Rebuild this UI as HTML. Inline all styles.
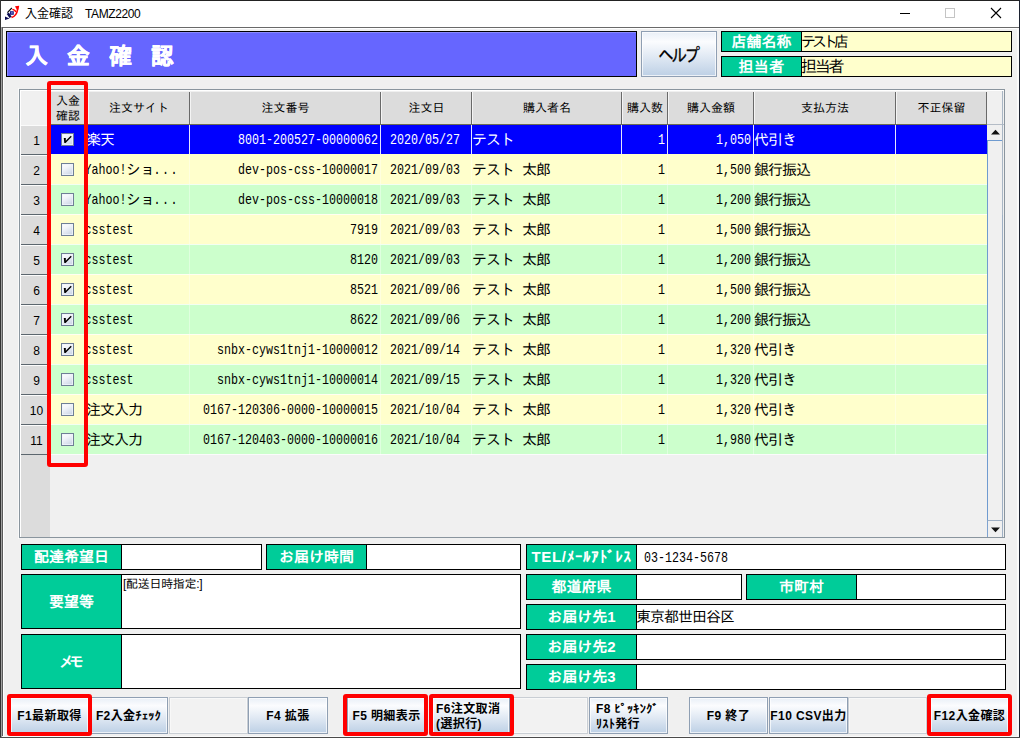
<!DOCTYPE html>
<html lang="ja"><head><meta charset="utf-8"><title>入金確認 TAMZ2200</title>
<style>
html,body{margin:0;padding:0}
body{width:1020px;height:738px;overflow:hidden;position:relative;background:#f0f0f0;font-family:"Liberation Sans","IPAGothic",sans-serif;color:#000}
div,span{box-sizing:border-box}
.a{position:absolute}
#win{left:0;top:0;width:1020px;height:738px;background:#f0f0f0;overflow:hidden}
#tbar{left:1px;top:1px;width:1018px;height:26px;background:#fff}
#ttl{left:25px;top:6px;font:12px/16px "Liberation Sans","Noto Sans CJK JP",sans-serif;white-space:pre}
#hdr{left:6px;top:31px;width:631px;height:46px;background:#6666ff;border:1px solid #000}
#hdr i{left:0;top:0;right:0;bottom:0;border-top:1px solid #8a8aff;border-left:1px solid #8a8aff}
#hdr b{left:18px;top:12px;font:bold 23px/24px "Liberation Sans","IPAGothic",sans-serif;letter-spacing:-2px;-webkit-text-stroke:.4px #fff;color:#fff;white-space:pre}
.btn{background:linear-gradient(#e9eff7 0%,#fbfcfe 22%,#dfe8f3 58%,#bdd0e5 100%);border:1px solid #8f9fb3;box-shadow:inset 0 0 0 1px rgba(255,255,255,.7);text-align:center}
#help{left:641px;top:31px;width:76px;height:46px;font:19px/47px "Liberation Sans","IPAGothic",sans-serif}
#help span{display:inline-block;transform:scaleX(.82);letter-spacing:-3px;margin-left:-3px;-webkit-text-stroke:.3px #000}
.lbl{background:#00cc99;border:1px solid #000;color:#fff;font:bold 15px/19px "Liberation Sans","IPAGothic",sans-serif;text-align:center;white-space:nowrap;overflow:hidden}
.fld{background:#fff;border:1px solid #000;white-space:nowrap;overflow:hidden}
.y{background:#ffffcc}
.m{font:15px/28px "Liberation Mono","IPAGothic",monospace;letter-spacing:-1px}
.t14{font-size:14px}
#grid{left:19px;top:89px;width:986px;height:449px;border:1px solid #8a959e;background:#f0f0f0;overflow:hidden}
.ch{top:2px;height:33px;background:#dcdcdc;font:12px/33px "Liberation Sans","IPAGothic",sans-serif;text-align:center;padding-left:1px;border-right:1px solid #696969;white-space:nowrap}
.rh{left:1px;width:29px;height:30px;background:#dcdcdc;border-bottom:1px solid #5c666e;border-top:1px solid #fbfbfb;font:12px/31px "Liberation Sans","Noto Sans CJK JP",sans-serif;text-align:center;padding-left:2px}
.row{left:28px;width:939px;height:30px}
.c{top:0;height:30px;font:15px/33px "Liberation Mono","IPAGothic",monospace;letter-spacing:-1px;white-space:nowrap;overflow:hidden;border-right:1px solid rgba(255,255,255,.38)}
.sel .c{border-right-color:rgba(255,255,255,.9)}
.c u{display:inline-block;width:8px;text-decoration:none}
.r{text-align:right;padding-right:2px}
.l{text-align:left}
.n{display:inline-block;position:relative;top:-1px;font-size:15px;letter-spacing:0;transform:scaleX(.7778)}
.n.d{letter-spacing:2px;margin-left:1px}
.r .n{transform-origin:100% 50%}
.l .n{transform-origin:0 50%}
.cb{left:13px;top:8px;width:13px;height:13px;border:1px solid #6f7f96;background:linear-gradient(150deg,#ffffff 0%,#f2f5fa 35%,#c6d1e3 100%);box-shadow:inset 0 0 0 1px rgba(240,244,250,.8)}
.cb svg{position:absolute;left:0;top:0}
.red{border:4px solid #ff0000;border-radius:3px}
.fb{top:697px;height:37px;font:bold 12px/15px "Liberation Sans","Noto Sans CJK JP",sans-serif;letter-spacing:.4px;white-space:nowrap}
.fb span{position:absolute;left:0;right:0;top:11px}
.fb i{font-style:normal;font-family:"Liberation Sans","IPAGothic",sans-serif}
.fb.two span{top:4px;text-align:left;left:3px}
.eb{top:697px;height:37px;border:1px solid #c9ced4;background:#f2f2f2;box-shadow:inset 0 0 0 1px #f8f8f8}
</style></head>
<body>
<div id="win" class="a">
<div id="tbar" class="a"></div>
<svg class="a" style="left:0;top:0" width="24" height="24" viewBox="0 0 24 24"><path d="M11.5 17.6C15 16.5 17 13.5 17.6 9.5" stroke="#f00" stroke-width="1.6" fill="none"/><path d="M15 6.2L19.2 5.8L18.6 9.6L17.2 10.6Z" fill="#f00"/><path d="M12.3 9.3C14 9.4 15.3 10.3 15.8 12" stroke="#f00" stroke-width="1.3" fill="none"/><path d="M11.8 8L7.4 12.6" stroke="#000" stroke-width="1.1"/><path d="M7.8 13.2L10.6 17.4" stroke="#0a0a50" stroke-width="2.6"/><path d="M5 16.4L5 19.9L9.6 18.4Z" fill="#0a0a50"/><rect x="10" y="11.2" width="3.8" height="3.6" fill="#1c1c8c"/><rect x="11.2" y="12.2" width="1.4" height="1.4" fill="#8c9cd8"/></svg>
<div id="ttl" class="a">入金確認　<span style="letter-spacing:-.4px">TAMZ2200</span></div>
<svg class="a" style="left:890px;top:1px" width="128" height="26" viewBox="0 0 128 26"><path d="M10 12.5H20" stroke="#000" stroke-width="1"/><rect x="55.5" y="7.5" width="9" height="9" fill="none" stroke="#c4c4c4" stroke-width="1"/><path d="M101 7L111 17M111 7L101 17" stroke="#000" stroke-width="1.1"/></svg>
<div class="a" style="left:0;top:0;width:1020px;height:1px;background:#222"></div>
<div class="a" style="left:0;top:0;width:1px;height:738px;background:#333"></div>
<div class="a" style="left:1019px;top:0;width:1px;height:738px;background:#1c2230"></div>
<div class="a" style="left:0;top:737px;width:1020px;height:1px;background:#4a4a4a"></div>
<div class="a" style="left:1px;top:27px;width:1018px;height:1px;background:#696969"></div>
<div class="a" style="left:1px;top:27px;width:1px;height:710px;background:#a0a0a0"></div>
<div class="a" style="left:2px;top:27px;width:1px;height:709px;background:#5a5a5a"></div>
<div class="a" style="left:3px;top:28px;width:1px;height:709px;background:#fff"></div>
<div class="a" style="left:3px;top:28px;width:1014px;height:1px;background:#fff"></div>
<div class="a" style="left:18px;top:88px;width:1px;height:451px;background:#fafafa"></div>
<div class="a" style="left:1017px;top:28px;width:2px;height:709px;background:#fafafa"></div>
<div class="a" style="left:3px;top:736px;width:1016px;height:1px;background:#fafafa"></div>
<div id="hdr" class="a"><i class="a"></i><b class="a">入　金　確　認</b></div>
<div id="help" class="a btn"><span>ヘルプ</span></div>
<div class="a lbl" style="left:721px;top:31px;width:81px;height:21px">店舗名称</div>
<div class="a fld y" style="left:801px;top:31px;width:211px;height:21px;font-size:15px;line-height:20px;letter-spacing:-4px;text-indent:-1px">テスト店</div>
<div class="a lbl" style="left:721px;top:56px;width:81px;height:21px;letter-spacing:.3px">担当者</div>
<div class="a fld y" style="left:801px;top:56px;width:211px;height:21px;font-size:16px;line-height:20px;letter-spacing:-2.2px;text-indent:-1px">担当者</div>
<div id="grid" class="a">
<div class="a" style="left:0;top:0;width:984px;height:1px;background:#fff"></div><div class="a" style="left:0;top:0;width:1px;height:447px;background:#fff"></div>
<div class="a" style="left:1px;top:1px;width:27px;height:34px;background:#f0f0f0"></div>
<div class="a ch" style="left:28px;width:40px;line-height:15px;padding:2px 0 0 1px">入金<br>確認</div>
<div class="a ch" style="left:68px;width:102px">注文サイト</div>
<div class="a ch" style="left:170px;width:191px">注文番号</div>
<div class="a ch" style="left:361px;width:91px">注文日</div>
<div class="a ch" style="left:452px;width:150px">購入者名</div>
<div class="a ch" style="left:602px;width:46px">購入数</div>
<div class="a ch" style="left:648px;width:86px">購入金額</div>
<div class="a ch" style="left:734px;width:142px">支払方法</div>
<div class="a ch" style="left:876px;width:91px">不正保留</div>
<div class="a" style="left:68px;top:2px;width:1px;height:33px;background:#f4f4f4"></div>
<div class="a" style="left:170px;top:2px;width:1px;height:33px;background:#f4f4f4"></div>
<div class="a" style="left:361px;top:2px;width:1px;height:33px;background:#f4f4f4"></div>
<div class="a" style="left:452px;top:2px;width:1px;height:33px;background:#f4f4f4"></div>
<div class="a" style="left:602px;top:2px;width:1px;height:33px;background:#f4f4f4"></div>
<div class="a" style="left:648px;top:2px;width:1px;height:33px;background:#f4f4f4"></div>
<div class="a" style="left:734px;top:2px;width:1px;height:33px;background:#f4f4f4"></div>
<div class="a" style="left:876px;top:2px;width:1px;height:33px;background:#f4f4f4"></div>
<div class="a" style="left:28px;top:34px;width:939px;height:1px;background:#6b6b55"></div>
<div class="a rh" style="top:35px">1</div>
<div class="a row sel" style="top:35px;height:29px;background:#0000ff;color:#fff">
<div class="a c" style="left:0;width:40px;top:0px"><div class="a cb"><svg width="11" height="11" viewBox="0 0 11 11"><path d="M1.8 4L3.8 4L3.8 6.8L8.8 1.8L9.7 2.7L3.6 8.9L2.3 8.9Z" fill="#000"/></svg></div></div>
<div class="a c l" style="left:40px;width:102px;top:0px;padding-left:0;text-indent:-2px">楽天</div>
<div class="a c r" style="left:142px;width:191px;top:0px"><span class="n" style="margin-left:-40.0px">8001-200527-00000062</span></div>
<div class="a c l" style="left:333px;width:91px;top:0px;padding-left:9px"><span class="n" style="margin-right:-20.0px">2020/05/27</span></div>
<div class="a c l" style="left:424px;width:150px;top:0px">テスト</div>
<div class="a c r" style="left:574px;width:46px;top:0px"><span class="n" style="margin-left:-2.0px">1</span></div>
<div class="a c r" style="left:620px;width:86px;top:0px"><span class="n" style="margin-left:-10.0px">1,050</span></div>
<div class="a c l" style="left:706px;width:142px;top:0px">代引き</div>
<div class="a c" style="left:848px;width:90px;top:0px;border-right:0"></div>
</div>
<div class="a rh" style="top:65px">2</div>
<div class="a row" style="top:64px;height:30px;background:#ffffcc;color:#000">
<div class="a c" style="left:0;width:40px;top:1px"><div class="a cb"></div></div>
<div class="a c l" style="left:40px;width:102px;top:1px;padding-left:0;text-indent:-2px"><span class="n" style="margin-right:-12.0px">Yahoo!</span>ショ<span class="n d">...</span></div>
<div class="a c r" style="left:142px;width:191px;top:1px"><span class="n" style="margin-left:-40.0px">dev-pos-css-10000017</span></div>
<div class="a c l" style="left:333px;width:91px;top:1px;padding-left:9px"><span class="n" style="margin-right:-20.0px">2021/09/03</span></div>
<div class="a c l" style="left:424px;width:150px;top:1px">テスト<u> </u>太郎</div>
<div class="a c r" style="left:574px;width:46px;top:1px"><span class="n" style="margin-left:-2.0px">1</span></div>
<div class="a c r" style="left:620px;width:86px;top:1px"><span class="n" style="margin-left:-10.0px">1,500</span></div>
<div class="a c l" style="left:706px;width:142px;top:1px">銀行振込</div>
<div class="a c" style="left:848px;width:90px;top:1px;border-right:0"></div>
</div>
<div class="a rh" style="top:95px">3</div>
<div class="a row" style="top:94px;height:30px;background:#ccffcc;color:#000">
<div class="a c" style="left:0;width:40px;top:1px"><div class="a cb"></div></div>
<div class="a c l" style="left:40px;width:102px;top:1px;padding-left:0;text-indent:-2px"><span class="n" style="margin-right:-12.0px">Yahoo!</span>ショ<span class="n d">...</span></div>
<div class="a c r" style="left:142px;width:191px;top:1px"><span class="n" style="margin-left:-40.0px">dev-pos-css-10000018</span></div>
<div class="a c l" style="left:333px;width:91px;top:1px;padding-left:9px"><span class="n" style="margin-right:-20.0px">2021/09/03</span></div>
<div class="a c l" style="left:424px;width:150px;top:1px">テスト<u> </u>太郎</div>
<div class="a c r" style="left:574px;width:46px;top:1px"><span class="n" style="margin-left:-2.0px">1</span></div>
<div class="a c r" style="left:620px;width:86px;top:1px"><span class="n" style="margin-left:-10.0px">1,200</span></div>
<div class="a c l" style="left:706px;width:142px;top:1px">銀行振込</div>
<div class="a c" style="left:848px;width:90px;top:1px;border-right:0"></div>
</div>
<div class="a rh" style="top:125px">4</div>
<div class="a row" style="top:124px;height:30px;background:#ffffcc;color:#000">
<div class="a c" style="left:0;width:40px;top:1px"><div class="a cb"></div></div>
<div class="a c l" style="left:40px;width:102px;top:1px;padding-left:0;text-indent:-2px"><span class="n" style="margin-right:-14.0px">csstest</span></div>
<div class="a c r" style="left:142px;width:191px;top:1px"><span class="n" style="margin-left:-8.0px">7919</span></div>
<div class="a c l" style="left:333px;width:91px;top:1px;padding-left:9px"><span class="n" style="margin-right:-20.0px">2021/09/03</span></div>
<div class="a c l" style="left:424px;width:150px;top:1px">テスト<u> </u>太郎</div>
<div class="a c r" style="left:574px;width:46px;top:1px"><span class="n" style="margin-left:-2.0px">1</span></div>
<div class="a c r" style="left:620px;width:86px;top:1px"><span class="n" style="margin-left:-10.0px">1,500</span></div>
<div class="a c l" style="left:706px;width:142px;top:1px">銀行振込</div>
<div class="a c" style="left:848px;width:90px;top:1px;border-right:0"></div>
</div>
<div class="a rh" style="top:155px">5</div>
<div class="a row" style="top:154px;height:30px;background:#ccffcc;color:#000">
<div class="a c" style="left:0;width:40px;top:1px"><div class="a cb"><svg width="11" height="11" viewBox="0 0 11 11"><path d="M1.8 4L3.8 4L3.8 6.8L8.8 1.8L9.7 2.7L3.6 8.9L2.3 8.9Z" fill="#000"/></svg></div></div>
<div class="a c l" style="left:40px;width:102px;top:1px;padding-left:0;text-indent:-2px"><span class="n" style="margin-right:-14.0px">csstest</span></div>
<div class="a c r" style="left:142px;width:191px;top:1px"><span class="n" style="margin-left:-8.0px">8120</span></div>
<div class="a c l" style="left:333px;width:91px;top:1px;padding-left:9px"><span class="n" style="margin-right:-20.0px">2021/09/03</span></div>
<div class="a c l" style="left:424px;width:150px;top:1px">テスト<u> </u>太郎</div>
<div class="a c r" style="left:574px;width:46px;top:1px"><span class="n" style="margin-left:-2.0px">1</span></div>
<div class="a c r" style="left:620px;width:86px;top:1px"><span class="n" style="margin-left:-10.0px">1,200</span></div>
<div class="a c l" style="left:706px;width:142px;top:1px">銀行振込</div>
<div class="a c" style="left:848px;width:90px;top:1px;border-right:0"></div>
</div>
<div class="a rh" style="top:185px">6</div>
<div class="a row" style="top:184px;height:30px;background:#ffffcc;color:#000">
<div class="a c" style="left:0;width:40px;top:1px"><div class="a cb"><svg width="11" height="11" viewBox="0 0 11 11"><path d="M1.8 4L3.8 4L3.8 6.8L8.8 1.8L9.7 2.7L3.6 8.9L2.3 8.9Z" fill="#000"/></svg></div></div>
<div class="a c l" style="left:40px;width:102px;top:1px;padding-left:0;text-indent:-2px"><span class="n" style="margin-right:-14.0px">csstest</span></div>
<div class="a c r" style="left:142px;width:191px;top:1px"><span class="n" style="margin-left:-8.0px">8521</span></div>
<div class="a c l" style="left:333px;width:91px;top:1px;padding-left:9px"><span class="n" style="margin-right:-20.0px">2021/09/06</span></div>
<div class="a c l" style="left:424px;width:150px;top:1px">テスト<u> </u>太郎</div>
<div class="a c r" style="left:574px;width:46px;top:1px"><span class="n" style="margin-left:-2.0px">1</span></div>
<div class="a c r" style="left:620px;width:86px;top:1px"><span class="n" style="margin-left:-10.0px">1,500</span></div>
<div class="a c l" style="left:706px;width:142px;top:1px">銀行振込</div>
<div class="a c" style="left:848px;width:90px;top:1px;border-right:0"></div>
</div>
<div class="a rh" style="top:215px">7</div>
<div class="a row" style="top:214px;height:30px;background:#ccffcc;color:#000">
<div class="a c" style="left:0;width:40px;top:1px"><div class="a cb"><svg width="11" height="11" viewBox="0 0 11 11"><path d="M1.8 4L3.8 4L3.8 6.8L8.8 1.8L9.7 2.7L3.6 8.9L2.3 8.9Z" fill="#000"/></svg></div></div>
<div class="a c l" style="left:40px;width:102px;top:1px;padding-left:0;text-indent:-2px"><span class="n" style="margin-right:-14.0px">csstest</span></div>
<div class="a c r" style="left:142px;width:191px;top:1px"><span class="n" style="margin-left:-8.0px">8622</span></div>
<div class="a c l" style="left:333px;width:91px;top:1px;padding-left:9px"><span class="n" style="margin-right:-20.0px">2021/09/06</span></div>
<div class="a c l" style="left:424px;width:150px;top:1px">テスト<u> </u>太郎</div>
<div class="a c r" style="left:574px;width:46px;top:1px"><span class="n" style="margin-left:-2.0px">1</span></div>
<div class="a c r" style="left:620px;width:86px;top:1px"><span class="n" style="margin-left:-10.0px">1,200</span></div>
<div class="a c l" style="left:706px;width:142px;top:1px">銀行振込</div>
<div class="a c" style="left:848px;width:90px;top:1px;border-right:0"></div>
</div>
<div class="a rh" style="top:245px">8</div>
<div class="a row" style="top:244px;height:30px;background:#ffffcc;color:#000">
<div class="a c" style="left:0;width:40px;top:1px"><div class="a cb"><svg width="11" height="11" viewBox="0 0 11 11"><path d="M1.8 4L3.8 4L3.8 6.8L8.8 1.8L9.7 2.7L3.6 8.9L2.3 8.9Z" fill="#000"/></svg></div></div>
<div class="a c l" style="left:40px;width:102px;top:1px;padding-left:0;text-indent:-2px"><span class="n" style="margin-right:-14.0px">csstest</span></div>
<div class="a c r" style="left:142px;width:191px;top:1px"><span class="n" style="margin-left:-46.0px">snbx-cyws1tnj1-10000012</span></div>
<div class="a c l" style="left:333px;width:91px;top:1px;padding-left:9px"><span class="n" style="margin-right:-20.0px">2021/09/14</span></div>
<div class="a c l" style="left:424px;width:150px;top:1px">テスト<u> </u>太郎</div>
<div class="a c r" style="left:574px;width:46px;top:1px"><span class="n" style="margin-left:-2.0px">1</span></div>
<div class="a c r" style="left:620px;width:86px;top:1px"><span class="n" style="margin-left:-10.0px">1,320</span></div>
<div class="a c l" style="left:706px;width:142px;top:1px">代引き</div>
<div class="a c" style="left:848px;width:90px;top:1px;border-right:0"></div>
</div>
<div class="a rh" style="top:275px">9</div>
<div class="a row" style="top:274px;height:30px;background:#ccffcc;color:#000">
<div class="a c" style="left:0;width:40px;top:1px"><div class="a cb"></div></div>
<div class="a c l" style="left:40px;width:102px;top:1px;padding-left:0;text-indent:-2px"><span class="n" style="margin-right:-14.0px">csstest</span></div>
<div class="a c r" style="left:142px;width:191px;top:1px"><span class="n" style="margin-left:-46.0px">snbx-cyws1tnj1-10000014</span></div>
<div class="a c l" style="left:333px;width:91px;top:1px;padding-left:9px"><span class="n" style="margin-right:-20.0px">2021/09/15</span></div>
<div class="a c l" style="left:424px;width:150px;top:1px">テスト<u> </u>太郎</div>
<div class="a c r" style="left:574px;width:46px;top:1px"><span class="n" style="margin-left:-2.0px">1</span></div>
<div class="a c r" style="left:620px;width:86px;top:1px"><span class="n" style="margin-left:-10.0px">1,320</span></div>
<div class="a c l" style="left:706px;width:142px;top:1px">代引き</div>
<div class="a c" style="left:848px;width:90px;top:1px;border-right:0"></div>
</div>
<div class="a rh" style="top:305px">10</div>
<div class="a row" style="top:304px;height:30px;background:#ffffcc;color:#000">
<div class="a c" style="left:0;width:40px;top:1px"><div class="a cb"></div></div>
<div class="a c l" style="left:40px;width:102px;top:1px;padding-left:0;text-indent:-2px">注文入力</div>
<div class="a c r" style="left:142px;width:191px;top:1px"><span class="n" style="margin-left:-50.0px">0167-120306-0000-10000015</span></div>
<div class="a c l" style="left:333px;width:91px;top:1px;padding-left:9px"><span class="n" style="margin-right:-20.0px">2021/10/04</span></div>
<div class="a c l" style="left:424px;width:150px;top:1px">テスト<u> </u>太郎</div>
<div class="a c r" style="left:574px;width:46px;top:1px"><span class="n" style="margin-left:-2.0px">1</span></div>
<div class="a c r" style="left:620px;width:86px;top:1px"><span class="n" style="margin-left:-10.0px">1,320</span></div>
<div class="a c l" style="left:706px;width:142px;top:1px">代引き</div>
<div class="a c" style="left:848px;width:90px;top:1px;border-right:0"></div>
</div>
<div class="a rh" style="top:335px">11</div>
<div class="a row" style="top:334px;height:30px;background:#ccffcc;color:#000">
<div class="a c" style="left:0;width:40px;top:1px"><div class="a cb"></div></div>
<div class="a c l" style="left:40px;width:102px;top:1px;padding-left:0;text-indent:-2px">注文入力</div>
<div class="a c r" style="left:142px;width:191px;top:1px"><span class="n" style="margin-left:-50.0px">0167-120403-0000-10000016</span></div>
<div class="a c l" style="left:333px;width:91px;top:1px;padding-left:9px"><span class="n" style="margin-right:-20.0px">2021/10/04</span></div>
<div class="a c l" style="left:424px;width:150px;top:1px">テスト<u> </u>太郎</div>
<div class="a c r" style="left:574px;width:46px;top:1px"><span class="n" style="margin-left:-2.0px">1</span></div>
<div class="a c r" style="left:620px;width:86px;top:1px"><span class="n" style="margin-left:-10.0px">1,980</span></div>
<div class="a c l" style="left:706px;width:142px;top:1px">代引き</div>
<div class="a c" style="left:848px;width:90px;top:1px;border-right:0"></div>
</div>
<div class="a" style="left:1px;top:365px;width:29px;height:82px;background:#dcdcdc"></div>
<div class="a" style="left:28px;top:94px;width:939px;height:1px;background:rgba(255,255,255,.75)"></div>
<div class="a" style="left:28px;top:124px;width:939px;height:1px;background:rgba(255,255,255,.75)"></div>
<div class="a" style="left:28px;top:154px;width:939px;height:1px;background:rgba(255,255,255,.75)"></div>
<div class="a" style="left:28px;top:184px;width:939px;height:1px;background:rgba(255,255,255,.75)"></div>
<div class="a" style="left:28px;top:214px;width:939px;height:1px;background:rgba(255,255,255,.75)"></div>
<div class="a" style="left:28px;top:244px;width:939px;height:1px;background:rgba(255,255,255,.75)"></div>
<div class="a" style="left:28px;top:274px;width:939px;height:1px;background:rgba(255,255,255,.75)"></div>
<div class="a" style="left:28px;top:304px;width:939px;height:1px;background:rgba(255,255,255,.75)"></div>
<div class="a" style="left:28px;top:334px;width:939px;height:1px;background:rgba(255,255,255,.75)"></div>
<div class="a" style="left:28px;top:364px;width:939px;height:1px;background:rgba(255,255,255,.75)"></div>
<div class="a" style="left:967px;top:35px;width:17px;height:413px;background:#f0f0f0"></div>
<div class="a" style="left:967px;top:34px;width:17px;height:1px;background:#b4bcc6"></div>
<div class="a" style="left:967px;top:50px;width:16px;height:381px;background:#f0f0f0;border:1px solid #9fb0c4;border-left-color:#6f9bd0;border-top-color:#6f9bd0"></div>
<svg class="a" style="left:968px;top:35px" width="15" height="15" viewBox="0 0 15 15"><path d="M3 9.6L7.5 4.8L12 9.6Z" fill="#111"/></svg>
<div class="a" style="left:967px;top:431px;width:16px;height:17px;border:1px solid #9fb0c4;border-top:0;border-left-color:#7fa3d0"></div>
<svg class="a" style="left:968px;top:432px" width="15" height="15" viewBox="0 0 15 15"><path d="M3 5.4L7.5 10.2L12 5.4Z" fill="#111"/></svg>
<div class="a" style="left:982px;top:1px;width:1px;height:124px;background:#a9b6c4"></div>
</div>
<div class="a red" style="left:47px;top:81px;width:41px;height:386px"></div>
<div class="a lbl" style="left:21px;top:544px;width:101px;height:26px;line-height:24px">配達希望日</div>
<div class="a fld" style="left:121px;top:544px;width:141px;height:26px"></div>
<div class="a lbl" style="left:266px;top:544px;width:101px;height:26px;line-height:24px">お届け時間</div>
<div class="a fld" style="left:366px;top:544px;width:155px;height:26px"></div>
<div class="a lbl" style="left:21px;top:574px;width:101px;height:55px;line-height:53px">要望等</div>
<div class="a fld" style="left:121px;top:574px;width:400px;height:55px;font-size:12px;line-height:14px;padding:2px 0 0 1px;letter-spacing:-.3px">[配送日時指定:]</div>
<div class="a lbl" style="left:21px;top:634px;width:101px;height:55px;line-height:53px;letter-spacing:-5px;text-indent:-5px">メモ</div>
<div class="a fld" style="left:121px;top:634px;width:400px;height:55px"></div>
<div class="a lbl" style="left:526px;top:544px;width:111px;height:26px;line-height:24px;letter-spacing:.7px">TEL/ﾒｰﾙｱﾄﾞﾚｽ</div>
<div class="a fld m" style="left:636px;top:544px;width:370px;height:26px;padding-left:7px"><span class="n" style="transform-origin:0 50%;top:0">03-1234-5678</span></div>
<div class="a lbl" style="left:526px;top:574px;width:111px;height:26px;line-height:24px">都道府県</div>
<div class="a fld" style="left:636px;top:574px;width:106px;height:26px"></div>
<div class="a lbl" style="left:746px;top:574px;width:111px;height:26px;line-height:24px">市町村</div>
<div class="a fld" style="left:856px;top:574px;width:150px;height:26px"></div>
<div class="a lbl" style="left:526px;top:604px;width:111px;height:26px;line-height:24px">お届け先1</div>
<div class="a fld m" style="left:636px;top:604px;width:370px;height:26px;text-indent:-1px">東京都世田谷区</div>
<div class="a lbl" style="left:526px;top:634px;width:111px;height:26px;line-height:24px">お届け先2</div>
<div class="a fld" style="left:636px;top:634px;width:370px;height:26px"></div>
<div class="a lbl" style="left:526px;top:664px;width:111px;height:26px;line-height:24px">お届け先3</div>
<div class="a fld" style="left:636px;top:664px;width:370px;height:26px"></div>
<div class="a btn fb" style="left:10px;width:79px"><span>F1最新取得</span></div>
<div class="a btn fb" style="left:89px;width:79px"><span>F2入金<i>ﾁｪｯｸ</i></span></div>
<div class="a eb" style="left:169px;width:79px"></div>
<div class="a btn fb" style="left:248px;width:80px"><span>F4 拡張</span></div>
<div class="a btn fb" style="left:347px;width:79px"><span>F5 明細表示</span></div>
<div class="a btn fb two" style="left:432px;width:78px"><span>F6注文取消<br>(選択行)</span></div>
<div class="a eb" style="left:512px;width:76px"></div>
<div class="a btn fb two" style="left:589px;width:79px"><span style="left:6px">F8 <i>ﾋﾟｯｷﾝｸﾞ</i><br><i>ﾘｽﾄ</i>発行</span></div>
<div class="a btn fb" style="left:689px;width:79px"><span>F9 終了</span></div>
<div class="a btn fb" style="left:769px;width:79px"><span>F10 CSV出力</span></div>
<div class="a eb" style="left:848px;width:79px"></div>
<div class="a btn fb" style="left:930px;width:79px"><span>F12入金確認</span></div>
<div class="a red" style="left:7px;top:694px;width:85px;height:42px"></div>
<div class="a red" style="left:343px;top:694px;width:85px;height:42px"></div>
<div class="a red" style="left:429px;top:694px;width:85px;height:42px"></div>
<div class="a red" style="left:927px;top:694px;width:85px;height:42px"></div>
</div>
</body></html>
